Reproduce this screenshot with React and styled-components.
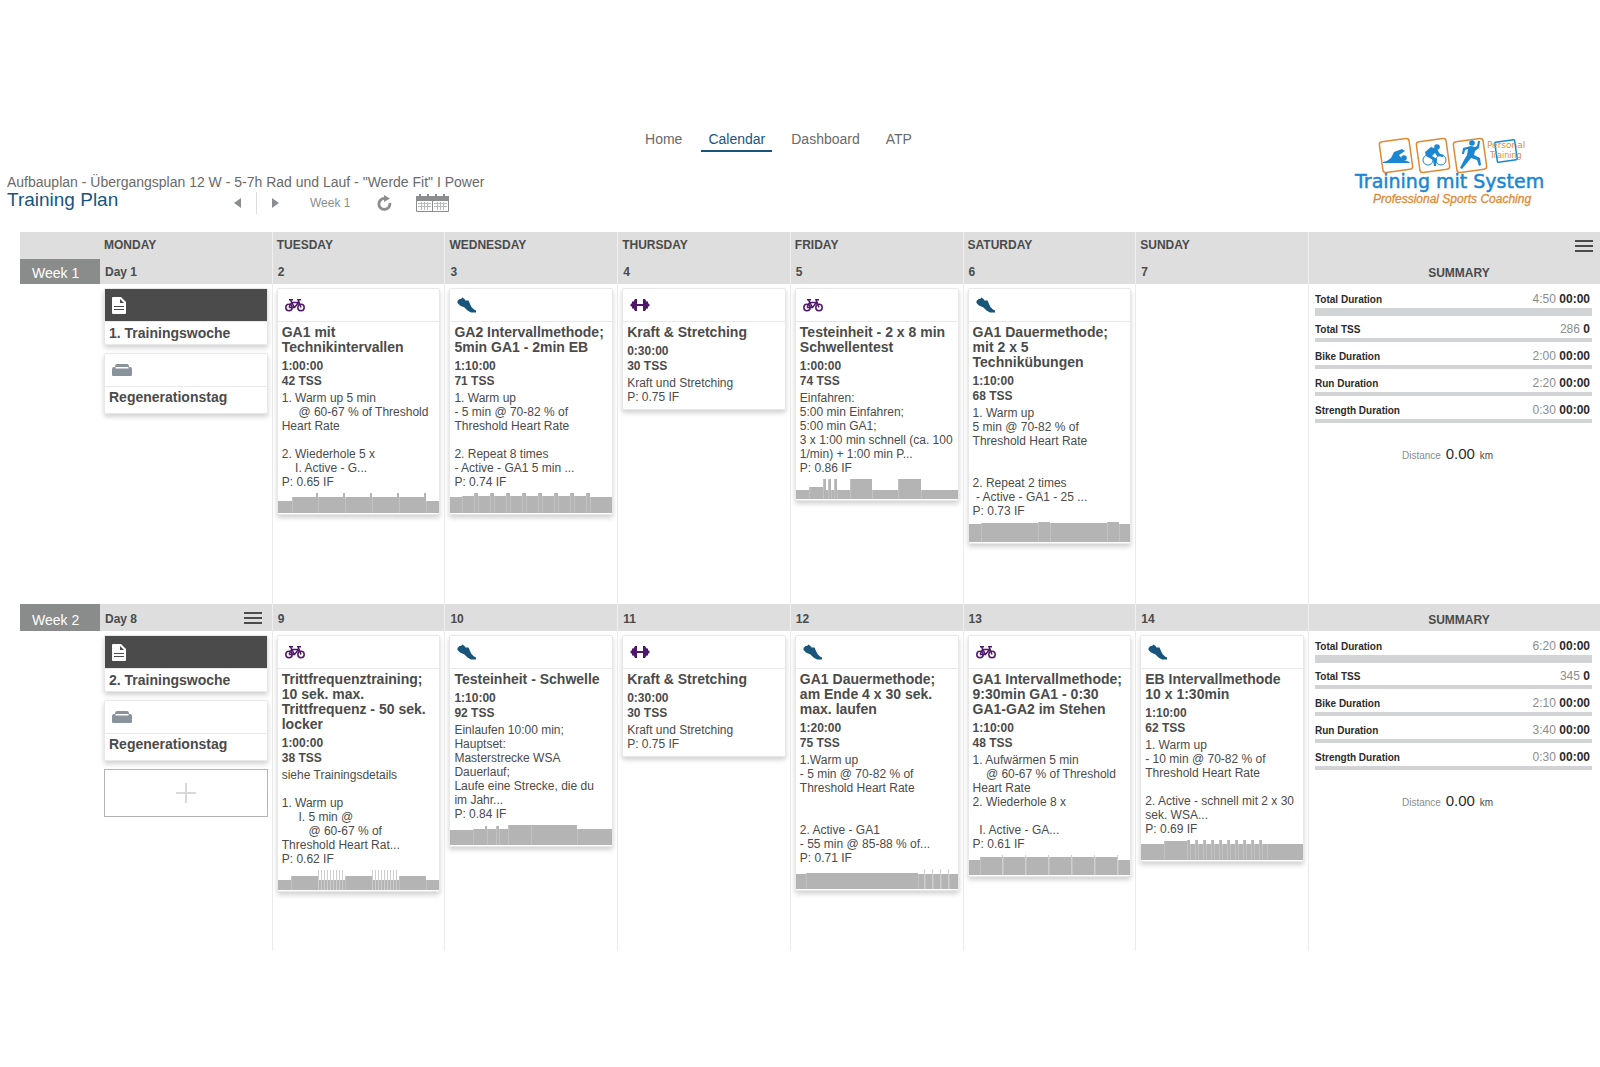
import React from "react";
import styled, { createGlobalStyle } from "styled-components";

const bikeIcon = "bike";
const runIcon = "run";
const strengthIcon = "strength";

// repeats a [width, height] pattern for the interval charts
const repeat = (times, pattern) => Array.from({ length: times }).flatMap(() => pattern);

const kraft = {
  icon: strengthIcon,
  title: "Kraft & Stretching",
  duration: "0:30:00",
  tss: "30 TSS",
  text: "Kraft und Stretching\nP: 0.75 IF",
};

const weeks = [
  {
    name: "Week 1",
    days: [
      {
        label: "Day 1",
        cards: [
          { icon: "note", title: "1. Trainingswoche" },
          { icon: "rest", title: "Regenerationstag" },
        ],
      },
      {
        label: "2",
        cards: [
          {
            icon: bikeIcon,
            title: "GA1 mit Technikintervallen",
            duration: "1:00:00",
            tss: "42 TSS",
            text: "1. Warm up 5 min\n     @ 60-67 % of Threshold Heart Rate\n\n2. Wiederhole 5 x\n    I. Active - G...\nP: 0.65 IF",
            chart: [[14, 12], [24, 16], [2, 20], ...repeat(4, [[25, 16], [2, 20]]), [14, 12]],
          },
        ],
      },
      {
        label: "3",
        cards: [
          {
            icon: runIcon,
            title: "GA2 Intervallmethode; 5min GA1 - 2min EB",
            duration: "1:10:00",
            tss: "71 TSS",
            text: "1. Warm up\n- 5 min @ 70-82 % of Threshold Heart Rate\n\n2. Repeat 8 times\n- Active - GA1 5 min ...\nP: 0.74 IF",
            chart: [[12, 16], ...repeat(8, [[12, 17], [4, 20]]), [22, 16]],
          },
        ],
      },
      { label: "4", cards: [kraft] },
      {
        label: "5",
        cards: [
          {
            icon: bikeIcon,
            title: "Testeinheit - 2 x 8 min Schwellentest",
            duration: "1:00:00",
            tss: "74 TSS",
            text: "Einfahren:\n5:00 min Einfahren;\n5:00 min GA1;\n3 x 1:00 min schnell (ca. 100 1/min) + 1:00 min P...\nP: 0.86 IF",
            chart: [
              [13, 9], [14, 12], [3, 20], [2, 9], [3, 20], [3, 9], [3, 20],
              [13, 9], [22, 20], [26, 9], [23, 20], [37, 9],
            ],
          },
        ],
      },
      {
        label: "6",
        cards: [
          {
            icon: runIcon,
            title: "GA1 Dauermethode; mit 2 x 5 Technikübungen",
            duration: "1:10:00",
            tss: "68 TSS",
            text: "1. Warm up\n5 min @ 70-82 % of Threshold Heart Rate\n\n\n2. Repeat 2 times\n - Active - GA1 - 25 ...\nP: 0.73 IF",
            chart: [[12, 18], [57, 19], [12, 20], [57, 19], [12, 20], [12, 18]],
          },
        ],
      },
      { label: "7", cards: [] },
    ],
    summary: [
      ["Total Duration", "4:50", "00:00"],
      ["Total TSS", "286", "0"],
      ["Bike Duration", "2:00", "00:00"],
      ["Run Duration", "2:20", "00:00"],
      ["Strength Duration", "0:30", "00:00"],
    ],
  },
  {
    name: "Week 2",
    days: [
      {
        label: "Day 8",
        menu: true,
        canAdd: true,
        cards: [
          { icon: "note", title: "2. Trainingswoche" },
          { icon: "rest", title: "Regenerationstag" },
        ],
      },
      {
        label: "9",
        cards: [
          {
            icon: bikeIcon,
            title: "Trittfrequenztraining; 10 sek. max. Trittfrequenz - 50 sek. locker",
            duration: "1:00:00",
            tss: "38 TSS",
            text: "siehe Trainingsdetails\n\n1. Warm up\n     I. 5 min @\n        @ 60-67 % of Threshold Heart Rat...\nP: 0.62 IF",
            chart: [
              [13, 10], [27, 14], ...repeat(9, [[1, 20, true], [2, 10]]),
              [27, 14], ...repeat(9, [[1, 20, true], [2, 10]]), [27, 14], [14, 10],
            ],
          },
        ],
      },
      {
        label: "10",
        cards: [
          {
            icon: runIcon,
            title: "Testeinheit - Schwelle",
            duration: "1:10:00",
            tss: "92 TSS",
            text: "Einlaufen 10:00 min;\nHauptset:\nMasterstrecke WSA Dauerlauf;\nLaufe eine Strecke, die du im Jahr...\nP: 0.84 IF",
            chart: [
              [23, 15], [12, 16], [2, 19], [9, 16], [3, 19], [9, 16],
              [23, 20], [46, 20], [35, 16],
            ],
          },
        ],
      },
      { label: "11", cards: [kraft] },
      {
        label: "12",
        cards: [
          {
            icon: runIcon,
            title: "GA1 Dauermethode; am Ende 4 x 30 sek. max. laufen",
            duration: "1:20:00",
            tss: "75 TSS",
            text: "1.Warm up\n- 5 min @ 70-82 % of Threshold Heart Rate\n\n\n2. Active - GA1\n- 55 min @ 85-88 % of...\nP: 0.71 IF",
            chart: [[10, 15], [112, 16], [6, 15], ...repeat(4, [[1, 20, true], [7, 15]]), [2, 15]],
          },
        ],
      },
      {
        label: "13",
        cards: [
          {
            icon: bikeIcon,
            title: "GA1 Intervallmethode; 9:30min GA1 - 0:30 GA1-GA2 im Stehen",
            duration: "1:10:00",
            tss: "48 TSS",
            text: "1. Aufwärmen 5 min\n    @ 60-67 % of Threshold Heart Rate\n2. Wiederhole 8 x\n\n  I. Active - GA...\nP: 0.61 IF",
            chart: [[11, 15], ...repeat(6, [[22, 18], [1, 20, true]]), [13, 15]],
          },
        ],
      },
      {
        label: "14",
        cards: [
          {
            icon: runIcon,
            title: "EB Intervallmethode 10 x 1:30min",
            duration: "1:10:00",
            tss: "62 TSS",
            text: "1. Warm up\n- 10 min @ 70-82 % of Threshold Heart Rate\n\n2. Active - schnell mit 2 x 30 sek. WSA...\nP: 0.69 IF",
            chart: [[23, 16], [23, 19], ...repeat(10, [[3, 20], [5, 16]]), [36, 16]],
          },
        ],
      },
    ],
    summary: [
      ["Total Duration", "6:20", "00:00"],
      ["Total TSS", "345", "0"],
      ["Bike Duration", "2:10", "00:00"],
      ["Run Duration", "3:40", "00:00"],
      ["Strength Duration", "0:30", "00:00"],
    ],
  },
];

const weekdays = ["MONDAY", "TUESDAY", "WEDNESDAY", "THURSDAY", "FRIDAY", "SATURDAY", "SUNDAY"];

const ActivityIcon = ({ type }) => {
  if (type === "note")
    return (
      <svg width="14" height="17" viewBox="0 0 14 17">
        <path d="M1 0h8l5 5v11a1 1 0 0 1-1 1H1a1 1 0 0 1-1-1V1a1 1 0 0 1 1-1z" fill="#fff" />
        <path d="M2 9.500h10M2 12.500h10" stroke="#4b4b4b" fill="none" />
        <path d="M8 2l4 4H8z" fill="#4b4b4b" />
      </svg>
    );
  if (type === "rest")
    return (
      <svg width="20" height="12" viewBox="0 0 20 12" fill="#8a929b">
        <path d="M5 0h10q2 0 2 3H3q0-3 2-3z" />
        <path d="M0 5q0-2 2-2h1.500v1.500h13V3H18q2 0 2 2v6q0 1-1 1H1q-1 0-1-1z" />
      </svg>
    );
  if (type === "bike")
    return (
      <svg width="20" height="14" viewBox="0 0 20 14" fill="none" stroke="#4f1769" strokeWidth="1.500">
        <circle cx="4" cy="9.500" r="3.200" />
        <circle cx="16" cy="9.500" r="3.200" />
        <path d="M4 9.500L6.500 4.500h7L9.500 9.500H4M5.500 2L9.500 9.500M16 9.500L13 1.700h3M4 1.700h4" />
      </svg>
    );
  if (type === "run")
    return (
      <svg width="20" height="16" viewBox="0 0 20 16" fill="#17557a">
        <path d="M0.500 4L2.500 2 4 2 5.500 0.500 7.500 2 8.500 3.500 11.500 3.500 13 7 14.500 10 17 12.500 19 13.500V15.500L14 15.500 10.500 13.500 7.500 10.500 3 8.500 0.500 6z" />
      </svg>
    );
  return (
    <svg width="20" height="12" viewBox="0 0 20 12" fill="#4f1769">
      <path d="M0 6l2-2V2.500h1.500L5 0h2v12H5L3.500 9.500H2V8zM20 6l-2-2V2.500h-1.500L15 0h-2v12h2l1.500-2.500H18V8z" />
      <path d="M7 5h6v2H7z" />
    </svg>
  );
};

const IntervalChart = ({ segments }) => {
  let x = 0;
  const bars = segments.map(([width, height, thin]) => {
    const bar = { x, width, height, thin };
    x += width;
    return bar;
  });
  return (
    <ChartSvg viewBox={`0 0 ${x} 20`} preserveAspectRatio="none" shapeRendering="crispEdges">
      {bars.map((bar, index) => (
        <g key={index}>
          <rect
            x={bar.x}
            y={20 - bar.height}
            width={bar.width}
            height={bar.height}
            fill={bar.thin ? "#cecece" : "#b4b4b4"}
          />
          {index > 0 && !bar.thin && bar.width > 2 && (
            <rect x={bar.x} y={20 - bar.height} width="1" height={bar.height} fill="#c2c2c2" />
          )}
        </g>
      ))}
    </ChartSvg>
  );
};

const WorkoutCard = ({ card }) => (
  <Card>
    <CardTop $dark={card.icon === "note"}>
      <ActivityIcon type={card.icon} />
    </CardTop>
    <CardBody $type={card.icon}>
      <h3>{card.title}</h3>
      {card.duration && (
        <Metrics>
          <p>{card.duration}</p>
          <p>{card.tss}</p>
        </Metrics>
      )}
      {card.text && <Description>{card.text}</Description>}
    </CardBody>
    {card.chart && <IntervalChart segments={card.chart} />}
  </Card>
);

const Menu = ({ label }) => (
  <MenuButton type="button" aria-label={label}>
    <span />
    <span />
    <span />
  </MenuButton>
);

const Summary = ({ rows }) => (
  <SummaryCell>
    {rows.map(([name, planned, done], index) => (
      <SummaryRow key={name} $first={index === 0}>
        <h4>{name}</h4>
        <p>
          {planned} <b>{done}</b>
        </p>
      </SummaryRow>
    ))}
    <Distance>
      Distance <strong>0.00</strong> <em>km</em>
    </Distance>
  </SummaryCell>
);

const Logo = () => (
  <svg width="197" height="72" viewBox="0 0 197 72" role="img" aria-label="Training mit System">
    <g fill="none" stroke="#e08a35" strokeWidth="1.500">
      <rect x="28" y="4" width="30" height="31" rx="3" transform="rotate(-8 43 19.500)" />
      <rect x="65" y="4" width="30" height="31" rx="3" transform="rotate(-8 80 19.500)" />
      <rect x="102" y="4" width="30" height="31" rx="3" transform="rotate(-8 117 19.500)" />
    </g>
    <rect x="143" y="5" width="20" height="20" rx="1" transform="rotate(-8 153 15)" fill="none" stroke="#1b87d2" strokeWidth="1.500" />
    <g fill="#1b87d2">
      <path d="M30 26q5-1 8-4l3-6 8-3 3 2-6 4 4 5 7 2-1 1H30z" />
      <circle cx="51" cy="22" r="2.800" />
      <circle cx="84" cy="11" r="2.800" />
      <path d="M72 16l6-5 6 2 3 5 4 1-1 2-6-1-2-3-3 3 5 3-1 7h-2l-1-6-7-4z" />
      <circle cx="119" cy="7" r="2.800" />
      <path d="M110 12l8-2 4 1 2-1 1-5h2l-1 7-4 3-1 4 6 3 1 7-2 1-2-6-6-2-4 5-5 6-2-1 4-8 3-5 1-6-3 1-1 4h-2z" />
    </g>
    <g fill="none" stroke="#1b87d2" strokeWidth="1">
      <circle cx="75" cy="24" r="5" />
      <circle cx="88" cy="24" r="5" />
    </g>
    <text x="134" y="12" fontSize="9" fill="#e08a35" fontFamily="DejaVu Sans, sans-serif">Personal</text>
    <text x="137" y="22" fontSize="8" fill="#e08a35" fontFamily="DejaVu Sans, sans-serif">Training</text>
    <text x="2" y="52" fontSize="19" fill="#1b87d2" stroke="#1b87d2" strokeWidth="0.500" fontFamily="DejaVu Sans, sans-serif">Training mit System</text>
    <text x="20" y="67" fontSize="12" fill="#e08a35" stroke="#e08a35" strokeWidth="0.300" fontStyle="italic" fontFamily="Liberation Sans, sans-serif">Professional Sports Coaching</text>
  </svg>
);

const App = () => (
  <>
    <GlobalStyle />
    <Header>
      <PlanInfo>
        <p>Aufbauplan - Übergangsplan 12 W - 5-7h Rad und Lauf - "Werde Fit" I Power</p>
        <PlanBar>
          <h1>Training Plan</h1>
          <Toolbar>
            <IconButton type="button" aria-label="Previous week">
              <svg width="7" height="10" viewBox="0 0 7 10"><path d="M7 0v10L0 5z" fill="#8b8d8e" /></svg>
            </IconButton>
            <Divider />
            <IconButton type="button" aria-label="Next week">
              <svg width="7" height="10" viewBox="0 0 7 10"><path d="M0 0v10l7-5z" fill="#8b8d8e" /></svg>
            </IconButton>
            <WeekName>Week 1</WeekName>
            <IconButton type="button" aria-label="Refresh">
              <svg width="15" height="16" viewBox="0 0 15 16">
                <path d="M8 3.500A5.500 5.500 0 1 0 12.800 8" fill="none" stroke="#8b8d8e" strokeWidth="2.800" />
                <path d="M7 0l6 3.500-6 3.500z" fill="#8b8d8e" />
              </svg>
            </IconButton>
            <IconButton type="button" aria-label="Pick a date">
              <svg width="33" height="18" viewBox="0 0 33 18">
                <path d="M0 2h33v5H0zM3 0h2v3H3zM11 0h2v3h-2zM19 0h2v3h-2zM27 0h2v3h-2z" fill="#8b8d8e" />
                <path d="M0.500 6v11.500h32V6M16.500 6v12" fill="none" stroke="#8b8d8e" />
                <path
                  d="M2 9.500h13M2 12.500h13M18 9.500h13M18 12.500h13M5.500 8v8M8.500 8v8M11.500 8v8M21.500 8v8M24.500 8v8M27.500 8v8"
                  stroke="#b9b9b9"
                  fill="none"
                />
              </svg>
            </IconButton>
          </Toolbar>
        </PlanBar>
      </PlanInfo>
      <Nav>
        <NavLink href="#home">Home</NavLink>
        <NavLink href="#calendar" $active>Calendar</NavLink>
        <NavLink href="#dashboard">Dashboard</NavLink>
        <NavLink href="#atp">ATP</NavLink>
      </Nav>
      <LogoLink href="#home">
        <Logo />
      </LogoLink>
    </Header>
    <Calendar>
      <WeekdayRow>
        <div />
        {weekdays.map((day) => (
          <Weekday key={day}>{day}</Weekday>
        ))}
        <MenuCell>
          <Menu label="Calendar options" />
        </MenuCell>
      </WeekdayRow>
      {weeks.map((week, index) => (
        <section key={week.name}>
          <WeekHead $first={index === 0}>
            <WeekLabel>{week.name}</WeekLabel>
            {week.days.map((day) => (
              <DayLabel key={day.label}>
                {day.label}
                {day.menu && <Menu label="Week options" />}
              </DayLabel>
            ))}
            <SummaryLabel>SUMMARY</SummaryLabel>
          </WeekHead>
          <WeekBody>
            <div />
            {week.days.map((day) => (
              <DayCell key={day.label}>
                {day.cards.map((card) => (
                  <WorkoutCard key={card.title} card={card} />
                ))}
                {day.canAdd && (
                  <AddButton type="button" aria-label="Add workout">
                    <svg width="20" height="20" viewBox="0 0 20 20">
                      <path d="M10 0v20M0 10h20" stroke="#d9d9d9" strokeWidth="2" />
                    </svg>
                  </AddButton>
                )}
              </DayCell>
            ))}
            <Summary rows={week.summary} />
          </WeekBody>
        </section>
      ))}
    </Calendar>
  </>
);

export default App;

const GlobalStyle = createGlobalStyle`
  * {
    box-sizing: border-box;
    margin: 0;
    padding: 0;
  }

  body {
    background: #fff;
    color: #4b4b4b;
    font: 400 12px/14px "Liberation Sans", Arial, sans-serif;
  }

  button {
    background: none;
    border: none;
    cursor: pointer;
  }

  svg {
    display: block;
  }
`;

const Header = styled.header`
  display: grid;
  grid-template-columns: 1fr auto 1fr;
  padding: 128px 50px 0 7px;
  min-height: 232px;
`;

const PlanInfo = styled.div`
  align-self: end;
  padding-bottom: 16px;
  white-space: nowrap;

  > p {
    font-size: 14px;
    line-height: 16px;
    color: #6a6a6a;
  }
`;

const PlanBar = styled.div`
  display: flex;
  align-items: flex-start;

  h1 {
    width: 227px;
    font-size: 19px;
    font-weight: 400;
    line-height: 20px;
    color: #17557f;
  }
`;

const Toolbar = styled.div`
  display: flex;
  align-items: center;
  height: 26px;
`;

const IconButton = styled.button`
  margin-right: 15px;
`;

const Divider = styled.span`
  width: 1px;
  height: 22px;
  margin-right: 15px;
  background: #dcdcdc;
`;

const WeekName = styled.span`
  margin: 0 27px 0 16px;
  color: #8b8d8e;

  + button {
    margin-right: 24px;
  }
`;

const Nav = styled.nav`
  display: flex;
  align-items: flex-start;
  gap: 12px;
`;

const NavLink = styled.a`
  padding: 0 7px;
  font-size: 14px;
  line-height: 22px;
  text-decoration: none;
  color: ${({ $active }) => ($active ? "#17557f" : "#6a6a6a")};
  border-bottom: 2px solid ${({ $active }) => ($active ? "#17557f" : "transparent")};
`;

const LogoLink = styled.a`
  justify-self: end;
  padding-top: 8px;
`;

const Calendar = styled.main`
  padding-left: 20px;
`;

const Row = styled.div`
  display: grid;
  grid-template-columns: 80px repeat(7, minmax(0, 1fr)) 291px;
`;

const WeekdayRow = styled(Row)`
  height: 27px;
  background: #dedede;
  font-weight: 700;
`;

const Weekday = styled.div`
  padding: 6px 0 0 4px;
  border-right: 1px solid #efefef;
`;

const MenuCell = styled.div`
  display: flex;
  justify-content: flex-end;
  align-items: center;
  padding-right: 7px;
`;

const MenuButton = styled.button`
  display: grid;
  gap: 3px;
  width: 18px;

  span {
    height: 2px;
    background: #4b4b4b;
  }
`;

const WeekHead = styled(Row)`
  height: ${({ $first }) => ($first ? "25px" : "27px")};
  background: #dedede;
  font-weight: 700;
  line-height: 16px;
`;

const WeekLabel = styled.h2`
  display: flex;
  align-items: flex-end;
  padding: 0 0 3px 12px;
  background: #8a8c8b;
  color: #fff;
  font-size: 14px;
  font-weight: 400;
`;

const DayLabel = styled.div`
  display: flex;
  justify-content: space-between;
  align-items: flex-end;
  padding: 0 10px 4px 5px;
  border-right: 1px solid #efefef;

  button {
    margin-bottom: 3px;
  }
`;

const SummaryLabel = styled.div`
  display: flex;
  justify-content: center;
  align-items: flex-end;
  padding: 0 0 3px 9px;
`;

const WeekBody = styled(Row)`
  min-height: 320px;
`;

const DayCell = styled.div`
  display: flex;
  flex-direction: column;
  gap: 8px;
  padding: 4px;
  border-right: 1px solid #ebebeb;
`;

const Card = styled.article`
  background: #fff;
  border: 1px solid #e8e8e8;
  border-radius: 2px;
  box-shadow: 0 3px 5px rgba(0, 0, 0, 0.18);
`;

const CardTop = styled.div`
  display: flex;
  align-items: center;
  height: 33px;
  padding-left: 7px;
  border-bottom: 1px solid #e8e8e8;
  background: ${({ $dark }) => ($dark ? "#4b4b4b" : "#fff")};
`;

const bodyPadding = {
  note: "4px 4px 3px",
  rest: "3px 4px 8px",
  strength: "3px 4px 5px",
};

const CardBody = styled.div`
  padding: ${({ $type }) => bodyPadding[$type] || "3px 4px 4px"};

  h3 {
    font-size: 14px;
    line-height: 15px;
  }
`;

const Metrics = styled.div`
  margin: 4px 0 2px;
  font-weight: 700;
  line-height: 15px;
`;

const Description = styled.p`
  white-space: pre-wrap;
`;

const ChartSvg = styled.svg`
  width: 100%;
  height: 20px;
  margin-bottom: 1px;
`;

const AddButton = styled.button`
  display: flex;
  justify-content: center;
  align-items: center;
  height: 48px;
  border: 1px solid #b4b4b4;
`;

const SummaryCell = styled.div`
  padding: 7px 8px 0 6px;
`;

const SummaryRow = styled.div`
  display: flex;
  justify-content: space-between;
  align-items: center;
  height: ${({ $first }) => ($first ? "25px" : "20px")};
  margin-bottom: ${({ $first }) => ($first ? "6px" : "7px")};
  padding-right: 2px;
  border-bottom: ${({ $first }) => ($first ? "8px" : "4px")} solid #d1d3d4;

  h4 {
    font-size: 10px;
    color: #2b2b2b;
  }

  p {
    padding-bottom: 2px;
    color: #8b8d8e;
  }

  b {
    color: #2b2b2b;
  }
`;

const Distance = styled.p`
  padding: 17px 12px 0 0;
  text-align: center;
  font-size: 10px;
  color: #8b8d8e;

  strong {
    margin: 0 2px;
    font-size: 15px;
    font-weight: 400;
    color: #2b2b2b;
  }

  em {
    font-style: normal;
    color: #4b4b4b;
  }
`;
